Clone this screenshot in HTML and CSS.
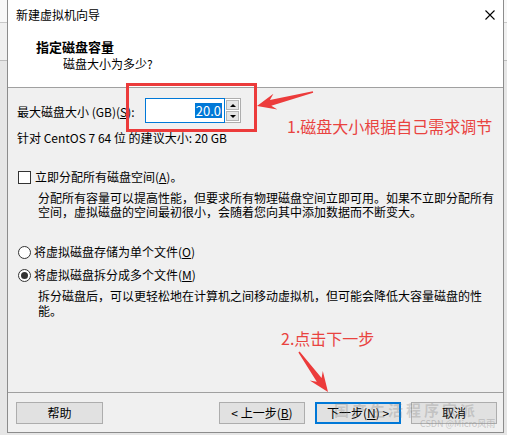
FILE: index.html
```html
<!DOCTYPE html>
<html lang="zh-CN">
<head>
<meta charset="utf-8">
<title>新建虚拟机向导</title>
<link rel="stylesheet" href="styles.css">
</head>
<body>
<div class="window">
  <div class="titlebar">
    <span class="title">新建虚拟机向导</span>
    <svg class="close" width="10" height="10" viewBox="0 0 10 10"><path d="M0.5 0.5L9.5 9.5M9.5 0.5L0.5 9.5" stroke="#000" stroke-width="1.1" fill="none"/></svg>
  </div>
  <div class="header">
    <div class="h1">指定磁盘容量</div>
    <div class="h2">磁盘大小为多少?</div>
  </div>
  <div class="content">
    <div class="size-row">
      <span class="label">最大磁盘大小 (GB)(<u>S</u>):</span>
      <div class="num-input"><span class="sel">20.0</span></div>
      <div class="spinner">
        <span class="spin up"><i></i></span>
        <span class="spin down"><i></i></span>
      </div>
    </div>
    <div class="rec">针对 CentOS 7 64 位 的建议大小: 20 GB</div>
    <div class="opt check-row"><span class="checkbox"></span>立即分配所有磁盘空间(<u>A</u>)。</div>
    <p class="desc d1">分配所有容量可以提高性能，但要求所有物理磁盘空间立即可用。如果不立即分配所有<br>空间，虚拟磁盘的空间最初很小，会随着您向其中添加数据而不断变大。</p>
    <div class="opt r1"><span class="radio"></span>将虚拟磁盘存储为单个文件(<u>O</u>)</div>
    <div class="opt r2"><span class="radio on"></span>将虚拟磁盘拆分成多个文件(<u>M</u>)</div>
    <p class="desc d2">拆分磁盘后，可以更轻松地在计算机之间移动虚拟机，但可能会降低大容量磁盘的性<br>能。</p>
  </div>
  <div class="footer">
    <button class="btn">帮助</button>
    <div class="nav">
      <button class="btn">&lt; 上一步(<u>B</u>)</button>
      <button class="btn primary">下一步(<u>N</u>) &gt;</button>
      <button class="btn">取消</button>
    </div>
  </div>
</div>

<svg class="annot" width="507" height="435" viewBox="0 0 507 435">
  <rect x="127.5" y="84.5" width="128" height="46" fill="none" stroke="#ec3b3b" stroke-width="3"/>
  <polygon fill="#ec3b3b" points="257,106 277.4,109.4 271.3,105.7 313.2,92.7 312.8,91.3 269.9,99.9 273.4,93.8"/>
  <polygon fill="#ec3b3b" points="328,392 309.8,380.5 316.8,381.7 298.4,352.4 299.6,351.6 321.6,378.1 322.8,371.1"/>
</svg>
<div class="note n1">1.磁盘大小根据自己需求调节</div>
<div class="note n2">2.点击下一步</div>
<div class="wm">国产生活程序家派</div>
<div class="wm2">CSDN @Micro风雨</div>
</body>
</html>
```

FILE: styles.css
```css
* { box-sizing: border-box; }
html, body { margin: 0; padding: 0; }
body {
  width: 507px;
  height: 435px;
  overflow: hidden;
  position: relative;
  font-family: "Noto Sans CJK SC", "Microsoft YaHei", sans-serif;
  font-size: 12px;
  color: #000;
  background:
    linear-gradient(#f8f8f8 0 22px, #c8c8c8 22px 23px, #f0f0f0 23px 60px, #bdbdbd 60px 61px, #e6e6e6 61px) ;
}
u { text-decoration: underline; text-underline-offset: 1px; }

.window {
  margin-left: 7px;
  width: 497px;
  height: 433px;
  border: 1px solid #8c8c8c;
  border-top: none;
  background: #f0f0f0;
  display: flex;
  flex-direction: column;
}

.titlebar {
  height: 30px;
  background: #fff;
  display: flex;
  align-items: center;
  justify-content: space-between;
  padding: 0 8px 0 8px;
}
.title { line-height: 16px; }
.close { display: block; margin-right: 0; }

.header {
  height: 58px;
  background: #fff;
  border-bottom: 1px solid #a0a0a0;
  padding-top: 9px;
}
.h1 {
  padding-left: 28px;
  font-weight: bold;
  font-size: 13px;
  line-height: 16px;
}
.h2 {
  padding-left: 55px;
  line-height: 16px;
  margin-top: 1px;
}

.content {
  height: 305px;
  border-bottom: 1px solid #a0a0a0;
  padding: 10px 0 0 9px;
}

.size-row {
  display: flex;
  align-items: center;
  height: 25px;
}
.label { width: 128px; flex-shrink: 0; line-height: 16px; margin-top: 3px; }
.num-input {
  width: 80px;
  height: 25px;
  border: 1px solid #0078d7;
  background: #fff;
  display: flex;
  align-items: center;
  justify-content: flex-end;
  padding-right: 2px;
}
.sel {
  background: #0078d7;
  color: #fff;
  line-height: 15px;
  padding: 0 1px;
  font-size: 13px;
}
.spinner {
  width: 16px;
  height: 25px;
  border: 1px solid #adadad;
  border-left: none;
  display: flex;
  flex-direction: column;
  background: #fff;
  padding: 1px;
}
.spin {
  flex: 1;
  background: #e5e5e5;
  border: 1px solid #b5b5b5;
  display: flex;
  align-items: center;
  justify-content: center;
}
.spin + .spin { margin-top: 1px; }
.spin i {
  display: block;
  width: 0; height: 0;
  border-left: 3px solid transparent;
  border-right: 3px solid transparent;
}
.up i { border-bottom: 3px solid #000; }
.down i { border-top: 3px solid #000; }

.rec { margin-top: 7px; line-height: 16px; }

.opt {
  display: flex;
  align-items: center;
  line-height: 16px;
  padding-left: 1px;
}
.check-row { margin-top: 23px; }
.checkbox {
  width: 13px; height: 13px;
  border: 1px solid #333;
  background: #fff;
  margin-right: 4px;
  flex-shrink: 0;
}
.radio {
  width: 13px; height: 13px;
  border: 1px solid #333;
  border-radius: 50%;
  background: #fff;
  margin-right: 3px;
  flex-shrink: 0;
  display: flex;
  align-items: center;
  justify-content: center;
}
.radio.on::after {
  content: "";
  width: 7px; height: 7px;
  border-radius: 50%;
  background: #333;
}

.desc {
  margin: 0;
  padding-left: 21px;
  line-height: 14px;
  white-space: nowrap;
}
.d1 { margin-top: 6px; }
.r1 { margin-top: 25px; }
.r2 { margin-top: 7px; }
.d2 { margin-top: 5px; line-height: 15px; }

.footer {
  flex: 1;
  display: flex;
  align-items: flex-start;
  justify-content: space-between;
  padding: 9px 6px 0 8px;
}
.nav { display: flex; gap: 10px; }
.btn {
  width: 86px;
  height: 22px;
  border: 1px solid #adadad;
  background: #e1e1e1;
  font-family: inherit;
  font-size: 12px;
  color: #000;
  padding: 0;
  line-height: 18px;
}
.footer > .btn { width: 87px; }
.btn.primary { border: 2px solid #0078d7; }

.annot { position: absolute; left: 0; top: 0; pointer-events: none; }
.note {
  position: absolute;
  color: #e9433f;
  font-size: 16px;
  line-height: 20px;
  white-space: nowrap;
}
.n1 { left: 287px; top: 116px; }
.n2 { left: 281px; top: 328px; }
.wm {
  position: absolute;
  left: 334px;
  top: 401px;
  font-size: 15px;
  font-weight: bold;
  letter-spacing: 3px;
  color: rgba(120,120,120,0.28);
  white-space: nowrap;
  line-height: 18px;
}
.wm2 {
  position: absolute;
  left: 420px;
  top: 418px;
  font-size: 9px;
  line-height: 11px;
  color: rgba(140,140,140,0.45);
  white-space: nowrap;
}
```
